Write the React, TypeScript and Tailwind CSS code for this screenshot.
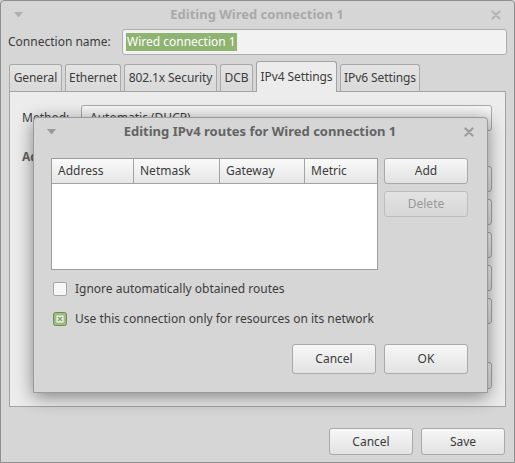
import React from "react";

const btn =
  "flex items-center justify-center rounded-[3px] border border-[#a9a9a9] bg-gradient-to-b from-[#f7f7f7] to-[#e2e2e2] text-[#3c3c3c]";

function Tri({ color }: { color: string }) {
  return (
    <svg width="9" height="6" viewBox="0 0 9 6">
      <path d="M0 0 L9 0 L4.5 5.5 Z" fill={color} />
    </svg>
  );
}

function Close({ color }: { color: string }) {
  return (
    <svg width="10" height="10" viewBox="0 0 10 10">
      <path d="M1.5 1.5 L8.5 8.5 M8.5 1.5 L1.5 8.5" stroke={color} strokeWidth="2.2" strokeLinecap="round" />
    </svg>
  );
}

function Tab({ label, active, w }: { label: string; active?: boolean; w: string }) {
  return active ? (
    <div className={"relative z-10 -mb-px flex h-[31px] items-center justify-center whitespace-nowrap rounded-t-[3px] border border-b-0 border-[#a3a3a3] bg-[#ececec] tracking-[-0.1px] " + w}>
      {label}
    </div>
  ) : (
    <div className={"mt-[2px] flex h-[27px] items-center justify-center whitespace-nowrap rounded-t-[3px] border border-b-0 border-[#a9a9a9] bg-gradient-to-b from-[#e4e4e4] to-[#d9d9d9] tracking-[-0.1px] " + w}>
      {label}
    </div>
  );
}

export default function App() {
  return (
    <div
      className="relative h-[463px] w-[515px] overflow-hidden bg-[#d6d6d6] text-[12px] text-[#3c3c3c]"
      style={{ fontFamily: '"Noto Sans", "DejaVu Sans", sans-serif' }}
    >
      <div className="flex h-full w-full flex-col rounded-t-[4px] border border-[#8f8f8f]">
        {/* title bar */}
        <div className="flex h-[27px] items-center px-[13px]">
          <Tri color="#b0b0b0" />
          <div className="flex-1 text-center text-[13px] font-bold text-[#a9a9a9]">Editing Wired connection 1</div>
          <Close color="#b4b4b4" />
        </div>
        {/* connection name */}
        <div className="flex h-[28px] items-center pl-[7px] pr-[7px]">
          <div className="w-[114px]">Connection name:</div>
          <div className="flex h-[26px] flex-1 items-center rounded-[3px] border border-[#adadad] bg-[#f2f2f2] px-[3px]">
            <span className="bg-[#8fb371] px-[1px] text-white">Wired connection 1</span>
          </div>
        </div>
        {/* tabs */}
        <div className="mt-[5px] flex items-end gap-[3px] pl-[8px]">
          <Tab label="General" w="w-[53px]" />
          <Tab label="Ethernet" w="w-[56px]" />
          <Tab label="802.1x Security" w="w-[93px]" />
          <Tab label="DCB" w="w-[33px]" />
          <Tab label="IPv4 Settings" active w="w-[81px]" />
          <Tab label="IPv6 Settings" w="w-[80px]" />
        </div>
        <div className="mx-[8px] flex h-[316px] flex-col border border-[#a3a3a3] bg-[#ececec] pl-[12px] pr-[13px] pt-[13px]">
          <div className="flex h-[26px] items-center">
            <div className="w-[59px]">Method:</div>
            <div className={btn + " h-[26px] flex-1 justify-start px-[8px]"}>Automatic (DHCP)</div>
          </div>
          <div className="mt-[17px] flex items-center">
            <div className="font-bold text-[#666]">Addresses</div>
          </div>
          <div className="flex flex-1 justify-end">
            <div className="flex w-[90px] flex-col gap-[7px]">
              <div className={btn + " h-[26px]"} />
              <div className={btn + " h-[26px]"} />
              <div className={btn + " h-[26px]"} />
              <div className={btn + " h-[26px]"} />
              <div className={btn + " h-[26px]"} />
              <div className={btn + " mt-[31px] h-[27px]"} />
            </div>
          </div>
        </div>
        {/* bottom */}
        <div className="mt-[21px] flex justify-end gap-[8px] pr-[9px]">
          <div className={btn + " h-[27px] w-[84px]"}>Cancel</div>
          <div className={btn + " h-[27px] w-[84px]"}>Save</div>
        </div>
      </div>

      {/* dialog */}
      <div className="absolute left-[33px] top-[117px] flex h-[276px] w-[455px] flex-col rounded-t-[4px] border border-[#9a9a9a] bg-[#d6d6d6] shadow-[0_4px_18px_rgba(0,0,0,0.45)]">
        <div className="flex h-[27px] items-center px-[13px]">
          <Tri color="#9a9a9a" />
          <div className="flex-1 text-center text-[13px] font-bold text-[#646464]">Editing IPv4 routes for Wired connection 1</div>
          <Close color="#9c9c9c" />
        </div>
        <div className="flex gap-[6px] pl-[17px] pr-[19px] pt-[13px]">
          <div className="flex h-[112px] w-[327px] flex-col border border-[#9d9d9d] bg-white">
            <div className="flex h-[25px] border-b border-[#a3a3a3] bg-gradient-to-b from-[#fafafa] to-[#e6e6e6]">
              <div className="flex w-[82px] items-center border-r border-[#a3a3a3] pl-[6px]">Address</div>
              <div className="flex w-[86px] items-center border-r border-[#a3a3a3] pl-[6px]">Netmask</div>
              <div className="flex w-[85px] items-center border-r border-[#a3a3a3] pl-[6px]">Gateway</div>
              <div className="flex flex-1 items-center pl-[6px]">Metric</div>
            </div>
          </div>
          <div className="flex flex-1 flex-col gap-[7px]">
            <div className={btn + " h-[26px]"}>Add</div>
            <div className="flex h-[26px] items-center justify-center rounded-[3px] border border-[#bdbdbd] bg-gradient-to-b from-[#e3e3e3] to-[#d7d7d7] text-[#999]">
              Delete
            </div>
          </div>
        </div>
        <div className="mt-[12px] flex h-[14px] items-center gap-[8px] pl-[19px]">
          <div className="h-[14px] w-[14px] rounded-[2px] border border-[#a5a5a5] bg-[#f7f7f7]" />
          <span>Ignore automatically obtained routes</span>
        </div>
        <div className="mt-[16px] flex h-[14px] items-center gap-[8px] pl-[19px]">
          <svg width="14" height="14" viewBox="0 0 14 14">
            <rect x="0.5" y="0.5" width="13" height="13" rx="2" fill="#9cbc82" stroke="#6f8f55" />
            <rect x="3.5" y="3.5" width="7" height="7" fill="#f4f8ef" />
            <path d="M5 5 L9 9 M9 5 L5 9" stroke="#7ea25f" strokeWidth="1.6" />
          </svg>
          <span>Use this connection only for resources on its network</span>
        </div>
        <div className="mt-[18px] flex justify-end gap-[8px] pr-[19px]">
          <div className={btn + " h-[30px] w-[84px]"}>Cancel</div>
          <div className={btn + " h-[30px] w-[84px]"}>OK</div>
        </div>
      </div>
    </div>
  );
}
